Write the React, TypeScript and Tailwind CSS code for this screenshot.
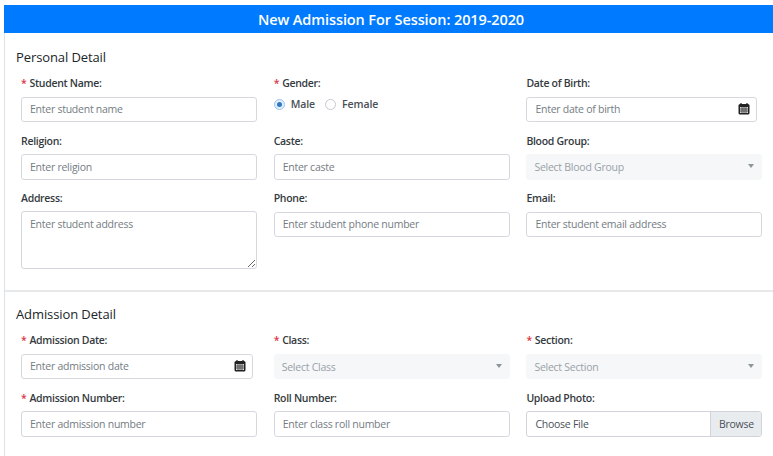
import { useState } from "react";

const font = "font-['Open_Sans',sans-serif]";
const inputCls = "block w-full h-[25.5px] rounded-[3px] border border-[#d5d9dd] bg-white px-2 text-[10.5px] tracking-[-0.25px] text-[#495057] placeholder:text-[#747c83] outline-none";

function Label({ text, required }: { text: string; required?: boolean }) {
  return (
    <div className="h-[14px] mb-[6.5px] text-[10.5px] leading-[14px] font-semibold tracking-[-0.3px] text-[#343a40] whitespace-nowrap">
      {required && <span className="text-[#dc3545] mr-[3px]">*</span>}
      {text}
    </div>
  );
}

function CalendarIcon() {
  return (
    <svg width="12" height="12" viewBox="0 0 12 12" className="absolute top-[6px] right-[7px]">
      <rect x="0.5" y="1" width="11" height="10.5" rx="1.5" fill="#222" />
      <rect x="2" y="4" width="8" height="6" fill="#ddd" />
      <path d="M3 0v2M9 0v2" stroke="#222" strokeWidth="1.2" />
      <path d="M4 4v6M6 4v6M8 4v6M2 6h8M2 8h8" stroke="#222" strokeWidth="0.7" />
    </svg>
  );
}

function DateField({ label, placeholder, required, width }: { label: string; placeholder: string; required?: boolean; width: string }) {
  return (
    <div>
      <Label text={label} required={required} />
      <div className={`relative ${width}`}>
        <input className={inputCls} placeholder={placeholder} />
        <CalendarIcon />
      </div>
    </div>
  );
}

function TextField({ label, placeholder, required }: { label: string; placeholder: string; required?: boolean }) {
  return (
    <div>
      <Label text={label} required={required} />
      <input className={inputCls} placeholder={placeholder} />
    </div>
  );
}

function SelectField({ label, placeholder, required }: { label: string; placeholder: string; required?: boolean }) {
  return (
    <div>
      <Label text={label} required={required} />
      <div className="relative h-[25.5px] rounded-[3px] bg-[#f5f7f9] px-2 text-[10.5px] tracking-[-0.25px] leading-[27px] text-[#9aa1a7]">
        {placeholder}
        <span className="absolute right-[8px] top-[10px] w-0 h-0 border-x-[3.5px] border-x-transparent border-t-[4px] border-t-[#8d949a]" />
      </div>
    </div>
  );
}

function Radio({ checked, label, onClick }: { checked: boolean; label: string; onClick: () => void }) {
  return (
    <button type="button" onClick={onClick} className="flex items-center gap-[6px] text-[10.5px] font-semibold tracking-[-0.1px] text-[#495057]">
      <span className={`flex items-center justify-center w-[11px] h-[11px] rounded-full border ${checked ? "border-[#9cc4ee] bg-[#e4effa]" : "border-[#c4c9ce] bg-white"}`}>
        {checked && <span className="w-[5px] h-[5px] rounded-full bg-[#2f78c4]" />}
      </span>
      {label}
    </button>
  );
}

export default function App() {
  const [gender, setGender] = useState("male");

  return (
    <div className={`h-[456px] w-[773px] overflow-hidden bg-white pt-[5px] pl-[4px] ${font}`}>
      <div className="h-full border-l border-[#dee2e6]">
        <div className="h-[28px] ml-[-1px] pl-[5px] bg-[#007bff] text-center text-[14.5px] leading-[29px] font-semibold tracking-[-0.1px] text-white">
          New Admission For Session: 2019-2020
        </div>

        <div className="pl-[11px] pt-[15px] h-[259px] border-b-2 border-[#e6e8ea]">
          <h2 className="text-[13px] leading-[18px] font-medium tracking-[-0.1px] text-[#212529]">Personal Detail</h2>
          <div className="grid grid-cols-[236px_236px_236px] gap-x-[16.7px] gap-y-[11.5px] ml-[5px] mt-[10px]">
            <TextField label="Student Name:" placeholder="Enter student name" required />
            <div>
              <Label text="Gender:" required />
              <div className="flex gap-[10px] mt-[0.5px]">
                <Radio checked={gender === "male"} label="Male" onClick={() => setGender("male")} />
                <Radio checked={gender === "female"} label="Female" onClick={() => setGender("female")} />
              </div>
            </div>
            <DateField label="Date of Birth:" placeholder="Enter date of birth" width="w-[231px]" />
            <TextField label="Religion:" placeholder="Enter religion" />
            <TextField label="Caste:" placeholder="Enter caste" />
            <SelectField label="Blood Group:" placeholder="Select Blood Group" />
            <div>
              <Label text="Address:" />
              <textarea className={`${inputCls} !h-[58px] py-[5px] mt-[-0.5px]`} placeholder="Enter student address" />
            </div>
            <TextField label="Phone:" placeholder="Enter student phone number" />
            <TextField label="Email:" placeholder="Enter student email address" />
          </div>
        </div>

        <div className="pl-[11px] pt-[13px]">
          <h2 className="text-[13px] leading-[18px] font-medium tracking-[-0.1px] text-[#212529]">Admission Detail</h2>
          <div className="grid grid-cols-[236px_236px_236px] gap-x-[16.7px] gap-y-[11.5px] ml-[5px] mt-[10px]">
            <DateField label="Admission Date:" placeholder="Enter admission date" required width="w-[232px]" />
            <SelectField label="Class:" placeholder="Select Class" required />
            <SelectField label="Section:" placeholder="Select Section" required />
            <TextField label="Admission Number:" placeholder="Enter admission number" required />
            <TextField label="Roll Number:" placeholder="Enter class roll number" />
            <div>
              <Label text="Upload Photo:" />
              <div className="flex h-[25.5px] rounded-[3px] border border-[#d0d4d9] text-[10.5px] tracking-[-0.25px] leading-[24px] text-[#495057] overflow-hidden">
                <span className="flex-1 px-2">Choose File</span>
                <span className="w-[51px] bg-[#e9ecef] border-l border-[#d0d4d9] text-center">Browse</span>
              </div>
            </div>
          </div>
        </div>
      </div>
    </div>
  );
}
